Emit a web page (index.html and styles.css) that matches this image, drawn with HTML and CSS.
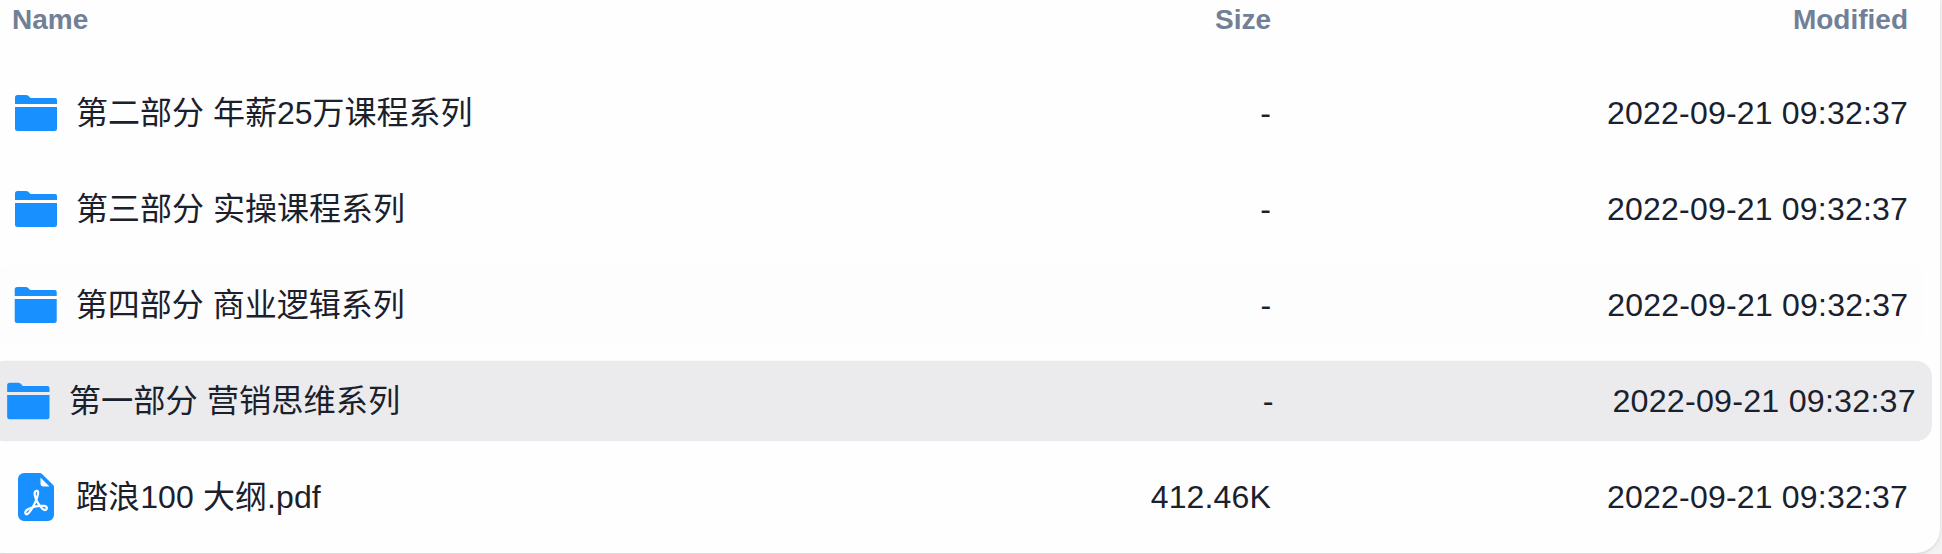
FILE: index.html
```html
<!DOCTYPE html>
<html lang="zh-CN">
<head>
<meta charset="utf-8">
<title>Files</title>
<link rel="stylesheet" href="styles.css">
</head>
<body>
<svg class="sprite" aria-hidden="true">
  <symbol id="folder" viewBox="0 0 48 48">
    <path d="M3 16V8.500Q3 6 5.500 6H14Q15.500 6 16.500 7L18.500 9H43Q45 9 45 11V15H3z"/>
    <path d="M3 18H45V39.500Q45 42 42.500 42H5.500Q3 42 3 39.500z"/>
  </symbol>
  <symbol id="pdf" viewBox="0 0 16 16">
    <path d="M5.523 12.424c.14-.082.293-.162.459-.238a7.878 7.878 0 0 1-.45.606c-.28.337-.498.516-.635.572a.266.266 0 0 1-.035.012.282.282 0 0 1-.026-.044c-.056-.11-.054-.216.04-.36.106-.165.319-.354.647-.548zm2.455-1.647c-.119.025-.237.05-.356.078a21.148 21.148 0 0 0 .5-1.05 12.045 12.045 0 0 0 .51.858c-.217.032-.436.07-.654.114zm2.525.939a3.881 3.881 0 0 1-.435-.41c.228.005.434.022.612.054.317.057.466.147.518.209a.095.095 0 0 1 .026.064.436.436 0 0 1-.06.2.307.307 0 0 1-.094.124.107.107 0 0 1-.069.015c-.09-.003-.258-.066-.498-.256zM8.278 6.97c-.04.244-.108.524-.2.829a4.86 4.86 0 0 1-.089-.346c-.076-.353-.087-.63-.046-.822.038-.177.11-.248.196-.283a.517.517 0 0 1 .145-.04c.013.03.028.092.032.198.005.122-.007.277-.038.465z"/>
    <path fill-rule="evenodd" d="M4 0h5.293A1 1 0 0 1 10 .293L13.707 4a1 1 0 0 1 .293.707V14a2 2 0 0 1-2 2H4a2 2 0 0 1-2-2V2a2 2 0 0 1 2-2zm5.500 1.500v2a1 1 0 0 0 1 1h2l-3-3zM4.165 13.668c.09.18.23.343.438.419.207.075.412.04.58-.03.318-.13.635-.436.926-.786.333-.401.683-.927 1.021-1.510a11.651 11.651 0 0 1 1.997-.406c.3.383.61.713.91.95.28.22.603.403.934.417a.856.856 0 0 0 .51-.138c.155-.101.27-.247.354-.416.09-.181.145-.37.138-.563a.844.844 0 0 0-.2-.518c-.226-.27-.596-.4-.96-.465a5.760 5.760 0 0 0-1.335-.05 10.954 10.954 0 0 1-.98-1.686c.25-.66.437-1.284.52-1.794.036-.218.055-.426.048-.614a1.238 1.238 0 0 0-.127-.538.7.7 0 0 0-.477-.365c-.202-.043-.41 0-.601.077-.377.15-.576.47-.651.823-.073.34-.04.736.046 1.136.088.406.238.848.43 1.295a19.697 19.697 0 0 1-1.062 2.227 7.662 7.662 0 0 0-1.482.645c-.37.22-.699.48-.897.787-.21.326-.275.714-.08 1.103z"/>
  </symbol>
</svg>
<main class="panel">
  <div class="columns header"><span>Name</span><span class="end">Size</span><span class="end">Modified</span></div>
  <div class="list">
    <div class="columns row"><div class="name"><svg class="icon"><use href="#folder"/></svg><span>第二部分 年薪25万课程系列</span></div><span class="end">-</span><span class="end date">2022-09-21 09:32:37</span></div>
    <div class="columns row"><div class="name"><svg class="icon"><use href="#folder"/></svg><span>第三部分 实操课程系列</span></div><span class="end">-</span><span class="end date">2022-09-21 09:32:37</span></div>
    <div class="columns row settling"><div class="name"><svg class="icon"><use href="#folder"/></svg><span>第四部分 商业逻辑系列</span></div><span class="end">-</span><span class="end date">2022-09-21 09:32:37</span></div>
    <div class="columns row active"><div class="name"><svg class="icon"><use href="#folder"/></svg><span>第一部分 营销思维系列</span></div><span class="end">-</span><span class="end date">2022-09-21 09:32:37</span></div>
    <div class="columns row"><div class="name file"><svg class="icon"><use href="#pdf"/></svg><span>踏浪100 大纲.pdf</span></div><span class="end size">412.46K</span><span class="end date">2022-09-21 09:32:37</span></div>
  </div>
</main>
</body>
</html>
```
FILE: styles.css
```css
body {
  margin: 0;
  height: 554px;
  overflow: hidden;
  background: #f4f3f3;
  color: #1a202c;
  font: 32px/48px "Liberation Sans", "Noto Sans CJK SC", sans-serif;
}
.sprite { display: none; }
.panel {
  box-sizing: border-box;
  width: 1960px;
  height: 553px;
  margin-left: -20px;
  padding: 0 16px;
  background: #fefefe;
  border-radius: 0 0 24px 24px;
  box-shadow: 0 1px 2px rgba(0, 0, 0, .1), 0 2px 6px rgba(0, 0, 0, .05);
}
.columns {
  display: grid;
  grid-template-columns: 956px 303px 637px;
  align-items: center;
  padding: 0 16px;
}
.end { text-align: right; }
.date { letter-spacing: .2px; }
.size { letter-spacing: .15px; }
.file { letter-spacing: .1px; }
.header {
  height: 40px;
  font-size: 28px;
  font-weight: 700;
  line-height: 40px;
  color: #718096;
}
.list {
  display: flex;
  flex-direction: column;
  gap: 16px;
  padding-top: 33px;
}
.row {
  height: 80px;
  border-radius: 16px;
}
.name {
  display: flex;
  align-items: center;
  gap: 16px;
  white-space: nowrap;
}
.icon {
  width: 48px;
  height: 48px;
  fill: #1890ff;
}
.settling {
  background: #fdfdfd;
  transform: scale(1.0003);
}
.active {
  background: #ebebed;
  transform: scale(1.0083);
}
```
